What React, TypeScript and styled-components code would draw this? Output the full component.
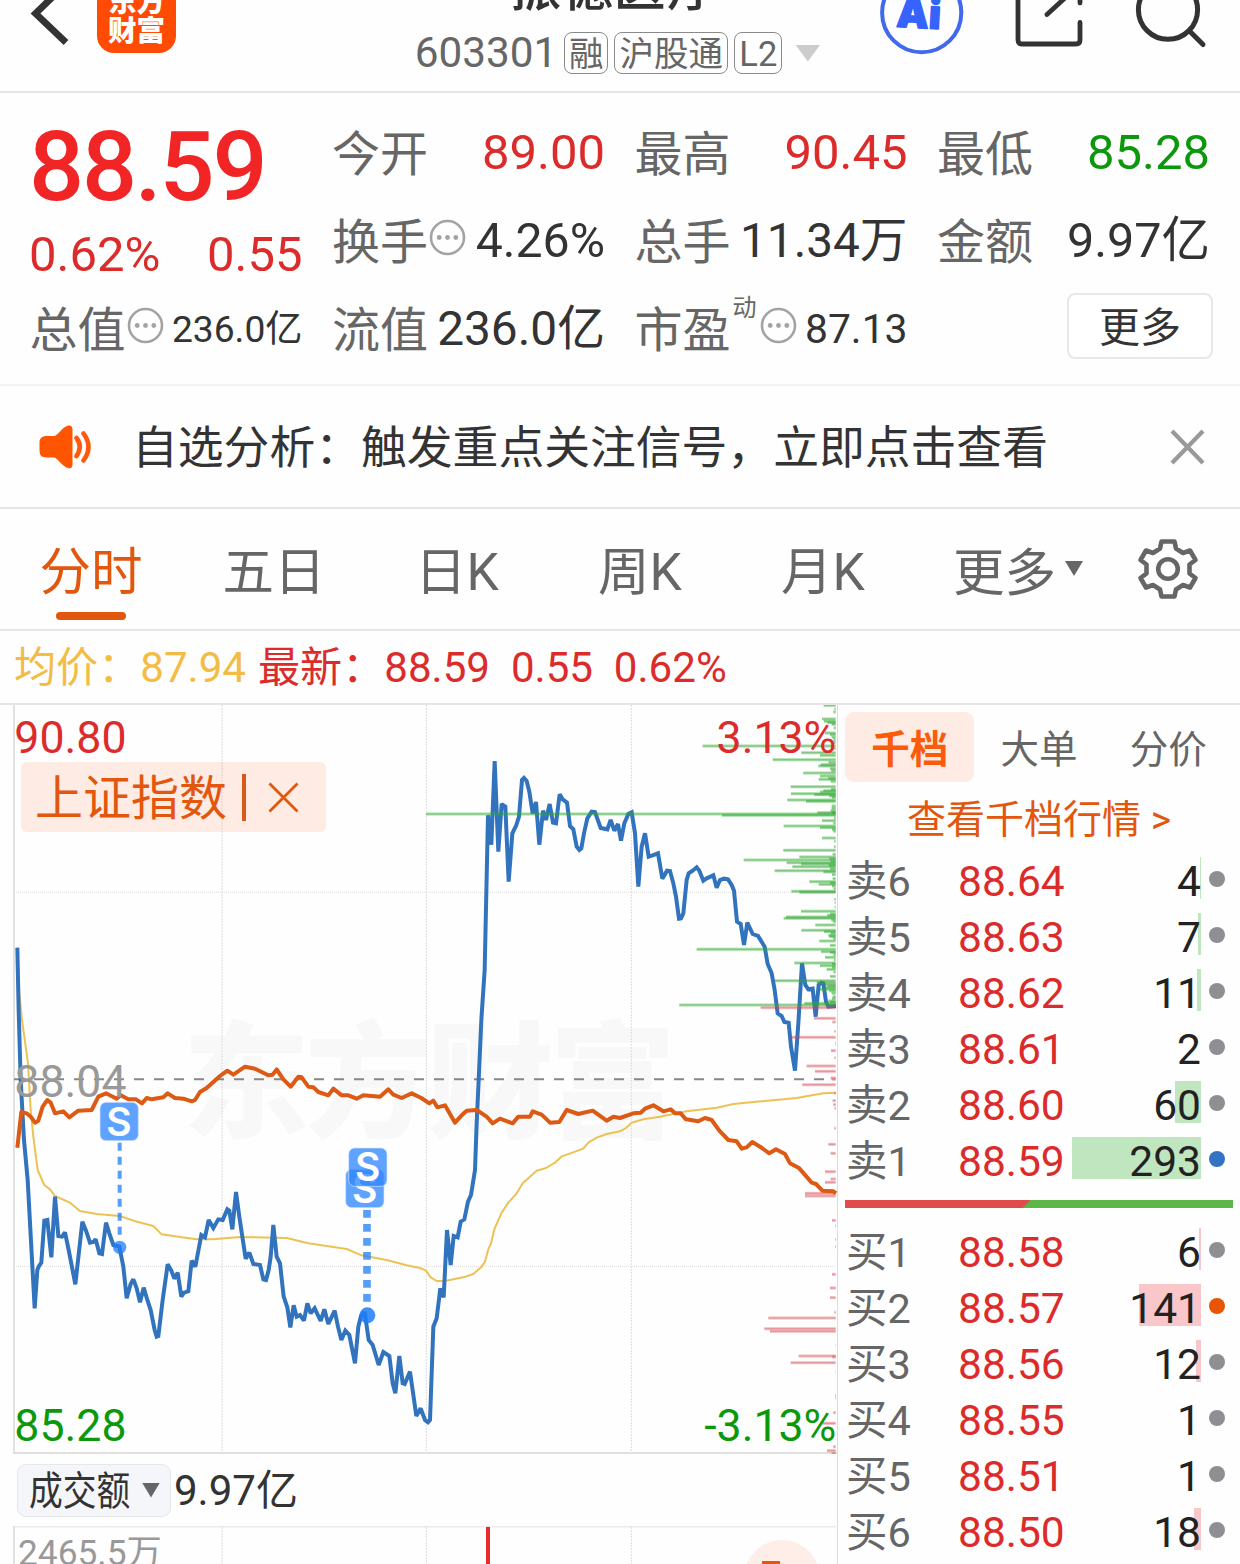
import React from "react";
import styled, { createGlobalStyle } from "styled-components";

const sans = `Roboto, "Noto Sans CJK SC", sans-serif`;

const color = {
  ink: "#333333",
  label: "#666666",
  muted: "#999999",
  line: "#e6e6e6",
  red: "#dc2b2b",
  green: "#0b990b",
  orange: "#e2570d",
  yellow: "#f3bc45",
  blue: "#3273be",
  peach: "#feece4",
};

const GlobalStyle = createGlobalStyle`
  body { margin: 0; background: #fff; }
  * { box-sizing: border-box; }
`;

const Page = styled.div`
  width: 1240px;
  height: 1564px;
  overflow: hidden;
  display: flex;
  flex-direction: column;
  background: #fefefe;
  font-family: ${sans};
  color: ${color.ink};
  white-space: nowrap;
`;

/* ---------- header ---------- */

const Header = styled.header`
  flex: none;
  height: 93px;
  display: flex;
  border-bottom: 2px solid ${color.line};
  overflow: hidden;
`;

const HeaderIcon = styled.svg<{ $w: number }>`
  flex: none;
  width: ${(p) => p.$w}px;
  height: 91px;
  fill: none;
  stroke: ${color.ink};
  stroke-width: 5;
  stroke-linecap: round;
  stroke-linejoin: round;
`;

const AppLogo = styled.div`
  flex: none;
  width: 79px;
  height: 79px;
  margin-top: -26px;
  padding-top: 14px;
  border-radius: 17px;
  background: #ff4b04;
  color: #fff;
  font-size: 28.5px;
  font-weight: 900;
  line-height: 29px;
  text-align: center;
`;

const HeaderCenter = styled.div`
  flex: 1;
  display: flex;
  flex-direction: column;
  align-items: center;
  padding-left: 181px;
`;

const StockName = styled.h1`
  margin: -43px 0 0;
  font-size: 52px;
  font-weight: 500;
  line-height: 64px;
  padding-right: 8px;
`;

const CodeRow = styled.div`
  display: flex;
  align-items: center;
  height: 42px;
  margin-top: 11px;
  gap: 6px;
  color: ${color.label};
`;

const Code = styled.span`
  font-size: 42.3px;
  line-height: 44px;
  margin-right: 1px;
`;

const Tag = styled.span<{ $w: number }>`
  width: ${(p) => p.$w}px;
  height: 42px;
  border: 1.5px solid #8a8a8a;
  border-radius: 8px;
  font-size: 34.5px;
  line-height: 42px;
  text-align: center;
`;

const Triangle = styled.i<{ $w: number; $h: number; $c: string }>`
  flex: none;
  width: ${(p) => p.$w}px;
  height: ${(p) => p.$h}px;
  background: ${(p) => p.$c};
  clip-path: polygon(0 0, 100% 0, 50% 100%);
`;

/* ---------- quote ---------- */

const Quote = styled.section`
  flex: none;
  height: 293px;
  padding: 16px 30px 0;
  display: grid;
  grid-template-columns: repeat(4, 1fr);
  grid-template-rows: repeat(3, 88px);
  column-gap: 30px;
  border-bottom: 2px solid #f3f3f3;
`;

const PriceCell = styled.div`
  grid-row: span 2;
  display: flex;
  flex-direction: column;
  color: ${color.red};
`;

const BigPrice = styled.div`
  height: 119px;
  margin-left: -1px;
  font-size: 97px;
  font-weight: 500;
  line-height: 117px;
  letter-spacing: -2.2px;
  color: #f12525;
`;

const ChangeRow = styled.div`
  display: flex;
  justify-content: space-between;
  font-size: 49px;
  line-height: 54px;
  margin-left: -1px;
`;

const Stat = styled.div`
  display: flex;
  justify-content: space-between;
  line-height: 88px;
`;

const StatLabel = styled.span`
  display: flex;
  align-items: center;
  height: 88px;
  margin-left: -0.5px;
  padding-top: 3px;
  font-size: 48px;
  color: ${color.label};
  & > svg {
    margin: -10px 0 0 1px;
  }
`;

const StatValue = styled.span<{ $c?: string; $size?: number }>`
  font-size: ${(p) => p.$size ?? 49}px;
  color: ${(p) => p.$c ?? color.ink};
`;

const Dynamic = styled.sup`
  align-self: flex-start;
  margin: 8px 2px 0 2px;
  font-size: 24px;
  line-height: 24px;
`;

const MoreButton = styled.button`
  justify-self: end;
  align-self: start;
  width: 146px;
  height: 66px;
  margin: 8px -3px 0 0;
  padding: 4px 0 0;
  border: 2px solid #e8e8ea;
  border-radius: 8px;
  background: #fff;
  font: 41px/58px ${sans};
  color: ${color.ink};
`;

/* ---------- notice ---------- */

const Notice = styled.section`
  flex: none;
  height: 123px;
  display: flex;
  align-items: center;
  padding: 0 34px 0 38px;
  border-bottom: 2px solid ${color.line};
`;

const NoticeText = styled.span`
  flex: 1;
  margin-left: 38px;
  padding-top: 4px;
  font-size: 45.8px;
  line-height: 60px;
`;

/* ---------- period tabs ---------- */

const Periods = styled.nav`
  flex: none;
  height: 122px;
  display: flex;
  align-items: center;
  border-bottom: 2px solid ${color.line};
`;

const Period = styled.div<{ $on?: boolean }>`
  width: 183px;
  height: 120px;
  padding: 32px 1px 0 0;
  display: flex;
  flex-direction: column;
  align-items: center;
  gap: 8px;
  font-size: 51.5px;
  line-height: 63px;
  color: ${(p) => (p.$on ? color.orange : color.label)};
  &::after {
    content: "";
    width: 70px;
    height: 8px;
    border-radius: 4px;
    background: ${(p) => (p.$on ? color.orange : "transparent")};
  }
`;

const MorePeriod = styled.div`
  width: 221px;
  display: flex;
  align-items: center;
  gap: 9px;
  padding: 8px 0 0 38px;
  font-size: 51.5px;
  line-height: 63px;
  color: ${color.label};
  & > i {
    margin-top: -9px;
  }
`;

/* ---------- average / latest line ---------- */

const Legend = styled.div`
  flex: none;
  height: 74px;
  padding-left: 14px;
  border-bottom: 2px solid ${color.line};
  font-size: 42.1px;
  line-height: 74px;
  color: ${color.red};
  white-space: pre;
`;

const Average = styled.span`
  margin-right: 12px;
  color: ${color.yellow};
`;

/* ---------- main area ---------- */

const Main = styled.main`
  flex: 1;
  min-height: 0;
  display: flex;
`;

const ChartColumn = styled.section`
  flex: none;
  width: 838px;
  border-right: 1.5px solid #dcdcdc;
`;

const ChartBox = styled.div`
  position: relative;
  height: 749px;
`;

const Plot = styled.svg<{ $h: number }>`
  display: block;
  width: 837px;
  height: ${(p) => p.$h}px;
  font-family: ${sans};
`;

const IndexChip = styled.div`
  position: absolute;
  left: 21px;
  top: 57px;
  width: 305px;
  height: 70px;
  padding: 0 27px 0 14px;
  display: flex;
  align-items: center;
  justify-content: space-between;
  border-radius: 6px;
  background: rgba(250, 145, 100, 0.17);
  color: #e2570d;
  font-size: 48px;
  line-height: 66px;
`;

const ChipName = styled.span`
  padding-top: 4px;
`;

const ChipRule = styled.i`
  width: 4px;
  height: 47px;
  margin-left: -8px;
  background: #d9591a;
`;

const VolumeBar = styled.div`
  height: 72px;
  padding-left: 17px;
  display: flex;
  align-items: center;
  gap: 3px;
  font-size: 42px;
  line-height: 73px;
`;

const VolumePicker = styled.div`
  width: 154px;
  height: 53px;
  display: flex;
  align-items: center;
  justify-content: space-between;
  padding: 0 10px 0 11px;
  border: 1.5px solid #e6e7ea;
  border-radius: 9px;
  background: #f5f6f9;
`;

const PickerName = styled.span`
  width: 102px;
  padding-top: 4px;
  font-size: 40px;
  line-height: 50px;
  transform: scaleX(0.845);
  transform-origin: left;
`;

/* ---------- order book ---------- */

const Book = styled.aside`
  flex: 1;
  padding: 7px 7px 0;
`;

const BookTabs = styled.div`
  display: flex;
  height: 70px;
`;

const BookTab = styled.div<{ $on?: boolean }>`
  flex: 1;
  border-radius: 9px;
  background: ${(p) => (p.$on ? color.peach : "transparent")};
  color: ${(p) => (p.$on ? "#fb5c0c" : color.label)};
  font-size: 38.5px;
  font-weight: ${(p) => (p.$on ? 700 : 400)};
  line-height: 75px;
  text-align: center;
`;

const BookLink = styled.div`
  height: 71px;
  font-size: 39px;
  line-height: 76px;
  text-align: center;
  color: ${color.orange};
`;

const Level = styled.div`
  position: relative;
  height: 56px;
  display: flex;
  align-items: center;
  font-size: 42.5px;
  line-height: 58px;
`;

const LevelName = styled.span`
  width: 113px;
  padding: 1px 0 0 1px;
  font-size: 41.5px;
  color: ${color.label};
`;

const LevelPrice = styled.span`
  padding-top: 1px;
  color: ${color.red};
`;

const LevelQty = styled.span`
  position: relative;
  flex: 1;
  padding-top: 1px;
  text-align: right;
  color: #222;
`;

const DepthBar = styled.i<{ $sell: boolean }>`
  position: absolute;
  right: 32px;
  top: 4px;
  height: 42px;
  background: ${(p) => (p.$sell ? "#c0e6c0" : "#f9c7c9")};
`;

const Dot = styled.i<{ $c: string }>`
  width: 16px;
  height: 16px;
  margin: -5px 8px 0 8px;
  border-radius: 50%;
  background: ${(p) => p.$c};
`;

const Balance = styled.div`
  height: 8px;
  margin: 11px 0 16px;
  background: linear-gradient(135deg, #e04b4b 0 131px, #5eb54a 131.7px);
`;

/* ---------- chart data, three units to a pixel ---------- */

type Pt = [number, number];

const parse = (s: string, dx = 0, dy = 0): Pt[] =>
  s.trim().split(/\s+/).map((p) => {
    const [x, y] = p.split(",").map(Number);
    return [x + dx, y + dy];
  });

const toPoints = (pts: Pt[]) => pts.map((p) => p.join(",")).join(" ");

const priceLine = toPoints([
  ...parse("52,743 56,930 62,1140 68,1250"),
  ...parse(
    `72,120 83,240 104,625 112,510 116,500 124,488 133,362 142,360 154,472 165,290 175,408 186,410 195,397
     206,450 226,553 247,365 258,392 270,428 280,426 287,418 298,460 306,462 318,368 328,400 340,435 358,440
     370,500 380,595 392,552 400,538 410,565 420,607 431,563 442,600 452,630 464,690 470,710 475,708 488,600
     503,493 514,512 523,536 533,518 544,590 552,578 565,574 575,482 586,500 604,405 615,412 626,360 640,384
     655,358 668,360 682,328 688,332 697,388 708,276 718,350 727,410 737,476 748,458 760,492 780,495 790,538
     798,540 806,510 812,470 820,375 830,470 840,490 851,590 862,622 871,682 881,616 890,650 900,645 912,662
     922,610 932,640 944,625 962,663 973,628 985,672 1004,632 1014,680 1024,720 1036,692 1048,705 1065,790
     1075,680 1083,648 1094,636 1106,720 1118,735 1136,795 1150,756 1168,768 1178,850 1186,880 1198,768
     1208,850 1214,852 1230,815 1249,948 1262,925 1275,960 1284,967 1290,960`,
    0,
    1200
  ),
  ...parse(
    "40,680 50,655 61,565 71,592 81,390 92,495 101,408 113,412 122,365 133,358 144,305 153,285 165,210",
    1260,
    1200
  ),
  ...parse(
    `170,1270 176,1140 184,960 194,810 204,346 214,434 224,183 235,455 245,312 256,320 266,545 277,400 288,378
     297,350 306,240 312,234 320,243 328,275 338,340 348,306 358,434 369,332 378,360 389,312 399,368 408,370
     419,283 428,298 441,308 450,378 460,388 470,440 478,450 484,445 492,400 502,355 515,335 525,336 542,384
     562,388 572,360 583,392 594,372 603,422 613,370 625,342 635,337 645,400 655,560 665,440 675,400 686,470
     698,466 714,460 727,536 741,512 750,513 760,550 768,590 777,656 783,655 790,640 800,540 806,520 818,512
     830,502 838,512 850,542 860,535 880,526 890,563 900,540 912,536 924,538 935,555 942,572 951,665 962,672
     972,735 982,668 998,702 1014,708 1034,740 1043,792 1055,820 1064,870 1073,940 1085,948 1093,966 1106,968
     1113,1040 1125,1112 1135,970 1146,790 1156,855 1165,868 1178,866 1187,950 1196,855 1204,848 1210,850
     1218,905 1225,920 1248,918`,
    1260
  ),
]);

const averageLine = toPoints([
  ...parse("52,760 58,880 66,960 84,1090 92,1230"),
  ...parse(
    `100,110 113,210 133,255 150,268 165,288 208,307 240,333 290,342 360,348 400,362 460,378 485,403 540,411
     590,418 640,418 720,411 860,414 925,430 1040,447 1085,466 1160,480 1220,496 1260,504 1278,512 1292,532
     1310,543 1335,543 1390,532 1420,522 1445,500 1455,485 1465,448 1473,430 1484,385 1505,338 1525,308
     1550,280 1568,250 1590,230 1610,212 1638,204 1665,188 1684,170 1750,146 1765,128 1790,113 1820,102
     1860,94 1878,84 1895,68 1930,58 1980,50 2060,34 2150,23 2200,12 2390,-6 2470,-20 2508,-22`,
    0,
    1200
  ),
]);

const indexLine = toPoints([
  ...parse(
    `52,1343 64,1236 80,1240 92,1250 105,1268 115,1262 128,1220 142,1200 152,1208 165,1240 190,1234 208,1252
     235,1232 275,1230 295,1190 318,1180 350,1196 362,1186 385,1198 408,1198 426,1210 440,1194 455,1198
     490,1192 503,1180 525,1194 550,1196 575,1204 585,1200 600,1176 620,1164 660,1128 682,1112 700,1124
     735,1100 765,1106 805,1126 818,1124 830,1108 850,1138 872,1160 895,1130 905,1132 925,1160 940,1162
     955,1176 985,1186 1000,1166 1025,1186 1045,1186 1070,1196 1090,1186 1140,1190 1165,1168 1180,1184
     1205,1194 1235,1180 1264,1194`
  ),
  ...parse(
    `28,1210 40,1202 52,1222 75,1216 105,1268 125,1246 140,1232 170,1230 200,1250 218,1270 240,1256 278,1270
     295,1250 330,1250 338,1234 365,1244 390,1268 418,1266 440,1230 475,1242 518,1232 560,1262 580,1250
     600,1254 640,1240 662,1238 675,1226 700,1216 730,1234 752,1228 765,1240 782,1240 798,1258 835,1264
     855,1254 875,1260 898,1292 925,1320 950,1324 965,1346 980,1342 997,1326 1020,1340 1048,1360 1068,1348
     1095,1362 1110,1390 1138,1405 1175,1448 1188,1452 1207,1472 1240,1474 1248,1480`,
    1260
  ),
]);

// left end and height of each resting order level
const sellDepth = parse(
  `1211,16 1240,36 1206,57 1212,64 1222,68 1235,73 1215,99 1230,104 848,138 1144,158 1200,166 1058,179 1225,187
   1195,198 1202,194 1230,206 1150,219 1200,228 1196,238 1225,235 1112,260 1210,272 1200,276 1113,281 1183,284
   1102,300 1158,304 1235,318 1235,325 18,342 906,346 1192,338 1206,362 1091,378 1200,383 1206,414 1090,451
   1238,463 1138,471 971,480 1100,488 1143,492 1117,500 1064,512 1210,516 1168,545 1196,553 1114,574 1138,577
   1243,598 1143,634 1098,651 1091,655 1186,675 1144,691 1212,695 1225,706 1198,723 1230,736 830,748
   1203,755 1215,772 1123,789 1200,797 1220,808 1230,829 1064,842 1190,848 1215,854 1200,868 1235,880
   1238,890 1225,903 1153,910 778,915 1243,27 1241,84 1235,112 1240,120 1238,128 1240,146 1234,212 1232,244
   1233,268 1228,288 1236,292 1232,332 1236,338 1242,354 1240,370 1236,388 1240,394 1243,424 1242,440
   1228,476 1232,484 1226,496 1230,506 1236,524 1238,536 1230,549 1236,558 1241,566 1244,608 1244,622
   1230,642 1222,646 1234,660 1240,665 1232,700 1228,710 1240,716 1230,757 1240,764 1242,780 1236,792
   1236,802 1240,816 1222,858 1216,863 1228,873 1236,896 1230,907`,
  1260
);

const buyDepth = parse(
  `1022,923 1182,955 1237,966 1243,994 1112,1012 1245,1030 1233,1052 1243,1073 1160,1098 1185,1114 1232,1134
   1235,1138 1147,1154 1243,1180 1238,1202 1240,1214 1243,1225 1243,1285 1225,1333 1232,1360 1215,1415
   1232,1437 1215,1447 1155,1480 1155,1488 1236,1561 1245,1577 1245,1618 1245,1640 1236,1723 1230,1764
   1230,1793 1243,1837 1045,1854 1033,1886 1050,1894 1246,1934 1136,1968 1237,1971 1112,1988 1246,2016
   1245,2086 1245,2094 1240,2138 1208,2170 1240,2240 1221,2252 1235,2260`,
  1260
);

const gridX = [666, 1279, 1894];

function Depth({ levels, pale, core }: { levels: Pt[]; pale: string; core: string }) {
  return (
    <g>
      {levels.map(([x, y], i) => (
        <g key={i}>
          <path d={`M${x} ${y}H2507`} stroke={pale} strokeWidth={9} />
          <path d={`M${x} ${y}H2507`} stroke={core} strokeWidth={3} />
        </g>
      ))}
    </g>
  );
}

function SellMarker({ x, y }: { x: number; y: number }) {
  return (
    <g>
      <rect x={x} y={y} width={115} height={115} rx={18} fill="#2f86ff" fillOpacity={0.77} stroke="#d9e8ff" strokeWidth={2} />
      <text x={x + 57} y={y + 100} fontFamily="Inter" fontSize={117} fontWeight={600} fill="#fff" textAnchor="middle">S</text>
    </g>
  );
}

function PriceChart() {
  return (
    <Plot $h={749} viewBox="0 15 2511 2247" fill="none">
      <text
        x={548} y={1283} fontSize={380} fontWeight={900} fill="#f8f8f8"
        textLength={1480} lengthAdjust="spacing"
      >
        东方财富
      </text>
      {gridX.map((x) => (
        <path key={x} d={`M${x} 15V2255`} stroke="#dcdcdc" strokeWidth={3} strokeDasharray="6 3" />
      ))}
      <path d="M42 577H2507M42 1699H2507" stroke="#dcdcdc" strokeWidth={3} strokeDasharray="3 3" />
      <path d="M42 15V2262" stroke="#dcdcdc" strokeWidth={5} />
      <path d="M42 2259H2511" stroke="#d6d6d6" strokeWidth={5} />
      <path d="M42 1138H2500" stroke="#868686" strokeWidth={6} strokeDasharray="30 30" />
      <polyline points={averageLine} stroke="#edc255" strokeWidth={6} strokeLinejoin="round" />
      <polyline points={priceLine} stroke={color.blue} strokeWidth={12} strokeLinejoin="miter" strokeMiterlimit={2} />
      <Depth levels={sellDepth} pale="rgba(50,180,50,.46)" core="rgba(40,120,50,.26)" />
      <Depth levels={buyDepth} pale="rgba(225,70,80,.38)" core="rgba(180,60,70,.3)" />
      <polyline points={indexLine} stroke="#dc5a14" strokeWidth={12} strokeLinejoin="round" />
      <g stroke="#1f7dfa" strokeOpacity={0.75}>
        <path d="M359 1328V1610" strokeWidth={12} strokeDasharray="24 18" />
        <path d="M1101 1530V1825" strokeWidth={23} strokeDasharray="23 19" />
      </g>
      <circle cx={359} cy={1642} r={20} fill="#1f7dfa" fillOpacity={0.75} />
      <circle cx={1102} cy={1846} r={24} fill="#1f7dfa" fillOpacity={0.85} />
      <SellMarker x={300} y={1207} />
      <SellMarker x={1037} y={1408} />
      <SellMarker x={1046} y={1344} />
      <g fontSize={134}>
        <text x={43} y={160} fill={color.red}>90.80</text>
        <text x={43} y={1191} fill="#999">88.04</text>
        <text x={43} y={2224} fill={color.green}>85.28</text>
        <text x={2509} y={160} fill={color.red} textAnchor="end">3.13%</text>
        <text x={2509} y={2224} fill={color.green} textAnchor="end">-3.13%</text>
      </g>
    </Plot>
  );
}

function VolumeChart() {
  return (
    <Plot $h={38} viewBox="0 0 837 38" fill="none">
      <path d="M13 .8H836" stroke="#ebebeb" strokeWidth={1.6} />
      <path d="M14 0V38" stroke="#dcdcdc" strokeWidth={1.6} />
      {gridX.map((x) => (
        <path key={x} d={`M${x / 3} 1V38`} stroke="#dcdcdc" strokeDasharray="2 1" />
      ))}
      <rect x={486} y={1} width={4} height={37} fill="#ea2a2a" />
      <text x={18} y={38.5} fontSize={35.3} fill="#999">2465.5万</text>
      <circle cx={782} cy={52} r={38} fill="#feeee7" />
      <rect x={762} y={35} width={18} height={4} fill={color.orange} />
    </Plot>
  );
}

function Info() {
  return (
    <svg width="37" height="37" viewBox="0 0 37 37">
      <circle cx="18.5" cy="18.5" r="16.5" fill="none" stroke="#a3a3a3" strokeWidth="2.6" />
      <g fill="#a3a3a3">
        <circle cx="10.2" cy="18.5" r="2.4" />
        <circle cx="18.5" cy="18.5" r="2.4" />
        <circle cx="26.8" cy="18.5" r="2.4" />
      </g>
    </svg>
  );
}

const levels: { side: "卖" | "买"; n: number; price: string; qty: number; dot?: string }[] = [
  { side: "卖", n: 6, price: "88.64", qty: 4 },
  { side: "卖", n: 5, price: "88.63", qty: 7 },
  { side: "卖", n: 4, price: "88.62", qty: 11 },
  { side: "卖", n: 3, price: "88.61", qty: 2 },
  { side: "卖", n: 2, price: "88.60", qty: 60 },
  { side: "卖", n: 1, price: "88.59", qty: 293, dot: "#3273c4" },
  { side: "买", n: 1, price: "88.58", qty: 6 },
  { side: "买", n: 2, price: "88.57", qty: 141, dot: "#e85500" },
  { side: "买", n: 3, price: "88.56", qty: 12 },
  { side: "买", n: 4, price: "88.55", qty: 1 },
  { side: "买", n: 5, price: "88.51", qty: 1 },
  { side: "买", n: 6, price: "88.50", qty: 18 },
];

function Levels({ side }: { side: "卖" | "买" }) {
  return (
    <>
      {levels
        .filter((l) => l.side === side)
        .map((l) => (
          <Level key={l.n}>
            <DepthBar $sell={side === "卖"} style={{ width: Math.floor((l.qty * 129) / 293) }} />
            <LevelName>{side}{l.n}</LevelName>
            <LevelPrice>{l.price}</LevelPrice>
            <LevelQty>{l.qty}</LevelQty>
            <Dot $c={l.dot ?? "#8e8e93"} />
          </Level>
        ))}
    </>
  );
}

export default function App() {
  return (
    <Page>
      <GlobalStyle />
      <Header>
        <HeaderIcon $w={97} viewBox="0 0 97 91">
          <path d="M66-16 35.500 13.500 66 42.500" strokeWidth="6.800" strokeLinecap="butt" strokeLinejoin="miter" />
        </HeaderIcon>
        <AppLogo>东方<br />财富</AppLogo>
        <HeaderCenter>
          <StockName>振德医疗</StockName>
          <CodeRow>
            <Code>603301</Code>
            <Tag $w={44}>融</Tag>
            <Tag $w={114}>沪股通</Tag>
            <Tag $w={48}>L2</Tag>
            <Triangle $w={25} $h={17} $c="#cccccc" style={{ marginLeft: 7 }} />
          </CodeRow>
        </HeaderCenter>
        <HeaderIcon $w={362} viewBox="878 0 362 91">
          <circle cx="921.7" cy="12.7" r="39.6" stroke="#4169ee" strokeWidth="4" />
          <text
            x="896" y="28" fontFamily="Inter" fontSize="40.500" fontWeight="900" fill="#3563fb"
            stroke="#3563fb" strokeWidth="1.5" transform="rotate(3 921 28)"
          >
            Ai
          </text>
          <path d="M1018-10V40q0 4 4 4h54q4 0 4-4V22.500M1080-10V3M1047 14.500 1066-3" strokeWidth="4.800" />
          <circle cx="1168" cy="9.700" r="29.600" />
          <path d="m1191 32.500 12 12" />
        </HeaderIcon>
      </Header>

      <Quote>
        <PriceCell>
          <BigPrice>88.59</BigPrice>
          <ChangeRow><span>0.62%</span><span>0.55</span></ChangeRow>
        </PriceCell>
        <Stat><StatLabel>今开</StatLabel><StatValue $c={color.red}>89.00</StatValue></Stat>
        <Stat><StatLabel>最高</StatLabel><StatValue $c={color.red}>90.45</StatValue></Stat>
        <Stat><StatLabel>最低</StatLabel><StatValue $c={color.green}>85.28</StatValue></Stat>
        <Stat><StatLabel>换手<Info /></StatLabel><StatValue $size={48.2}>4.26%</StatValue></Stat>
        <Stat><StatLabel>总手</StatLabel><StatValue $size={47.7}>11.34万</StatValue></Stat>
        <Stat><StatLabel>金额</StatLabel><StatValue $size={48.5}>9.97亿</StatValue></Stat>
        <Stat><StatLabel>总值<Info /></StatLabel><StatValue $size={37.2}>236.0亿</StatValue></Stat>
        <Stat><StatLabel>流值</StatLabel><StatValue $size={47.8}>236.0亿</StatValue></Stat>
        <Stat><StatLabel>市盈<Dynamic>动</Dynamic><Info /></StatLabel><StatValue $size={40.8}>87.13</StatValue></Stat>
        <MoreButton>更多</MoreButton>
      </Quote>

      <Notice>
        <svg width="56" height="46" viewBox="0 0 56 46">
          <path d="M8 12h8c4 0 8-9 14-10.500q4.500-.5 4.500 4v35q0 4.500-4.500 3.500c-6-1.500-10-10-14-10.500H8q-6.500 0-6.500-7v-8q0-6.500 6.500-6.500z" fill="#ff5500" />
          <path d="M38.500 14q6.500 8.500 0 18M45.500 9.500q10 13.500 0 27" fill="none" stroke="#ff5a0c" strokeWidth="4.600" strokeLinecap="round" />
        </svg>
        <NoticeText>自选分析：触发重点关注信号，立即点击查看</NoticeText>
        <svg width="37" height="38" viewBox="0 0 37 38">
          <path d="M3 3 34 35M34 3 3 35" stroke="#999" strokeWidth="4.200" />
        </svg>
      </Notice>

      <Periods>
        <Period $on>分时</Period>
        <Period>五日</Period>
        <Period>日K</Period>
        <Period>周K</Period>
        <Period>月K</Period>
        <MorePeriod>更多<Triangle $w={18} $h={15} $c={color.label} /></MorePeriod>
        <svg width="64" height="64" viewBox="-32 -32 64 64" fill="none" stroke={color.label} strokeWidth="4.600" strokeLinejoin="round">
          <path d="M-6.500-27.500H6.500L8-20.500 15-16 22-18.500 27.500-9 21.500-4.500V4.500L27.500 9 22 18.500 15 16 8 20.500 6.500 27.500H-6.500L-8 20.500-15 16-22 18.500-27.500 9-21.500 4.500V-4.500L-27.500-9-22-18.500-15-16-8-20.500Z" />
          <circle r="9.800" />
        </svg>
      </Periods>

      <Legend>
        <Average>均价：87.94</Average>最新：88.59  0.55  0.62%
      </Legend>

      <Main>
        <ChartColumn>
          <ChartBox>
            <PriceChart />
            <IndexChip>
              <ChipName>上证指数</ChipName>
              <ChipRule />
              <svg width="31" height="31" viewBox="0 0 31 31">
                <path d="M1.500 1.500 29.500 29.500M29.500 1.500 1.500 29.500" stroke="#e2570d" strokeWidth="2.800" />
              </svg>
            </IndexChip>
          </ChartBox>
          <VolumeBar>
            <VolumePicker>
              <PickerName>成交额</PickerName>
              <Triangle $w={18} $h={15} $c={color.label} />
            </VolumePicker>
            9.97亿
          </VolumeBar>
          <VolumeChart />
        </ChartColumn>
        <Book>
          <BookTabs>
            <BookTab $on>千档</BookTab>
            <BookTab>大单</BookTab>
            <BookTab>分价</BookTab>
          </BookTabs>
          <BookLink>查看千档行情 &gt;</BookLink>
          <Levels side="卖" />
          <Balance />
          <Levels side="买" />
        </Book>
      </Main>
    </Page>
  );
}
